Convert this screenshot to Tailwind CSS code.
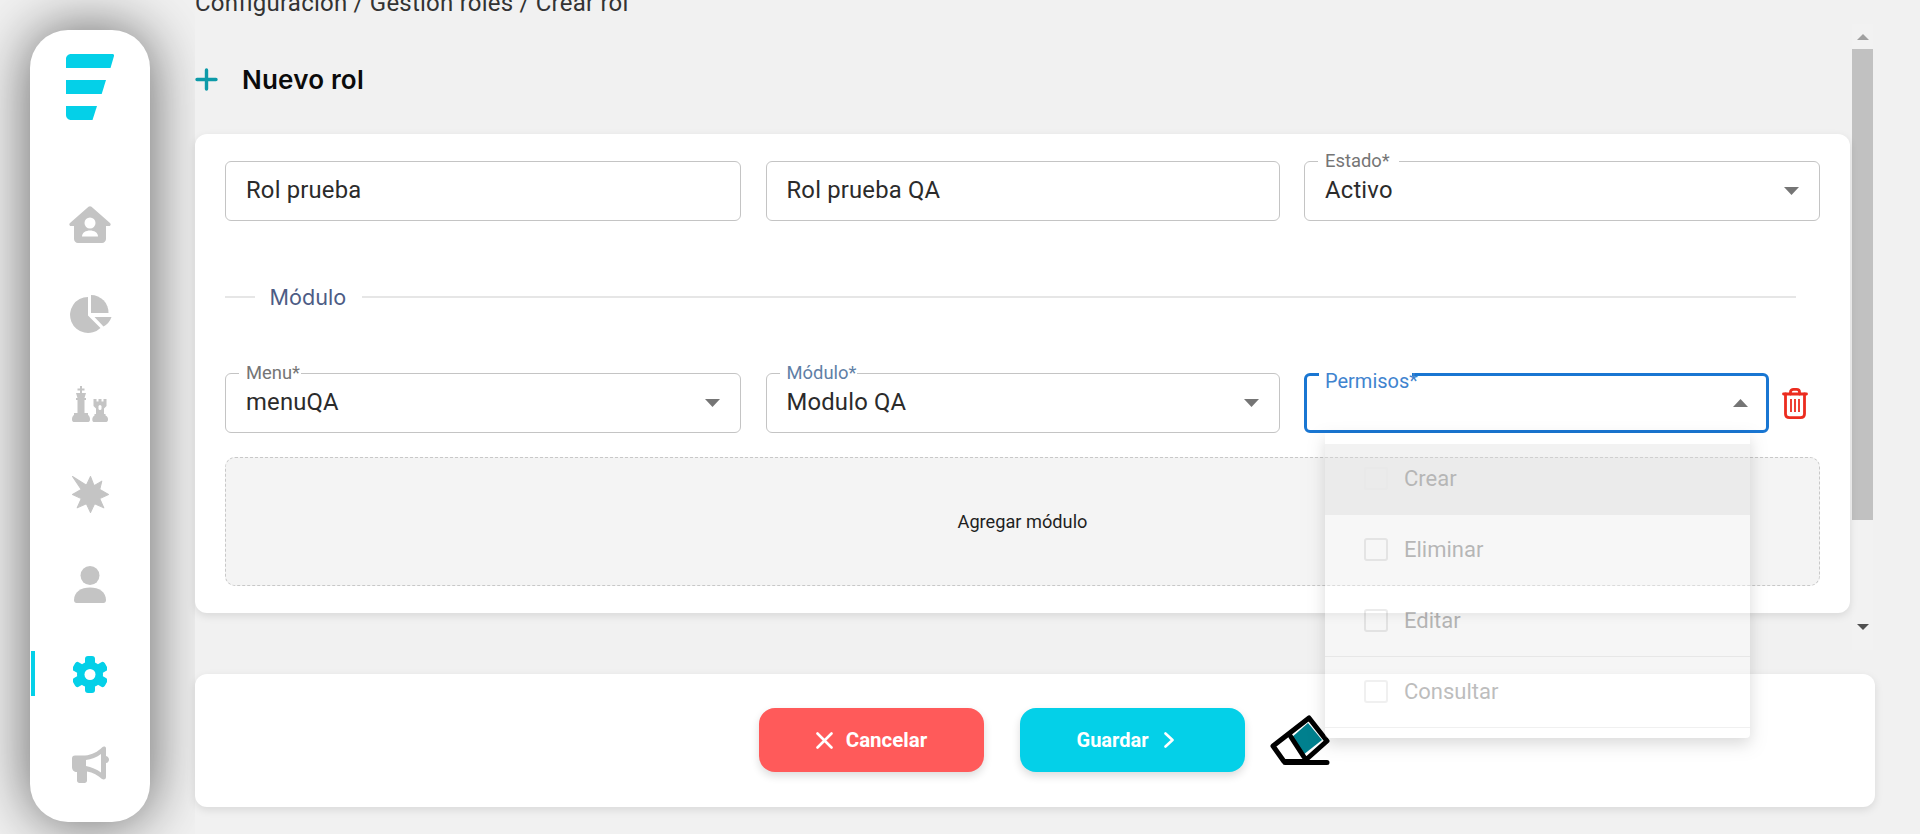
<!DOCTYPE html>
<html lang="es">
<head>
<meta charset="utf-8">
<title>Crear rol</title>
<script src="https://cdn.jsdelivr.net/npm/@tailwindcss/browser@4"></script>
</head>
<body class="bg-[#f1f1f1]">
<div class="w-[1920px] h-[834px] overflow-hidden flex bg-[#f1f1f1] font-['Roboto',sans-serif] text-[#2b2b2b]">

  <!-- Sidebar -->
  <aside class="relative shrink-0 ml-[30px] mt-[30px] w-[120px] h-[792px] bg-white rounded-[38px] shadow-[0_0_60px_rgba(0,0,0,0.6)] flex flex-col items-center">
    <svg class="mt-[24px] ml-[-1px]" width="48" height="66" viewBox="0 0 48 66" fill="#04d0e8">
      <path d="M5 0H46.500C47.600 0 48.300 1 48 2L44.500 14H0V5C0 2.200 2.200 0 5 0Z"/>
      <path d="M0 26H40L35.700 40H0Z"/>
      <path d="M0 52H31L26.500 66H5C2.200 66 0 63.800 0 61Z"/>
    </svg>
    <div class="mt-[59px] flex flex-col w-full">
      <div class="h-[90px] flex items-center justify-center">
        <svg width="42" height="37" viewBox="0 0 42 37" fill="#c4c4c4">
          <path d="M19.500 .8C20.400 0 21.600 0 22.500 .8L41 17C42.300 18.200 41.600 20 40 20H37V33C37 35.200 35.200 37 33 37H9C6.800 37 5 35.200 5 33V20H2C.4 20-.3 18.200 1 17Z"/>
          <circle cx="21" cy="17" r="5.500" fill="#fff"/>
          <path d="M13 30.500C13 26.500 17 24.500 21 24.500S29 26.500 29 30.500Z" fill="#fff"/>
        </svg>
      </div>
      <div class="h-[90px] flex items-center justify-center">
        <svg class="ml-[2px]" width="42" height="40" viewBox="0 0 42 40" fill="#c4c4c4">
          <path d="M18 3A18 18 0 1 0 30.500 34L18 21.500Z"/>
          <path d="M21 1A17.500 17.500 0 0 1 38.500 19H21Z"/>
          <path d="M24.500 23H41.500A17 17 0 0 1 33.500 32.500Z"/>
        </svg>
      </div>
      <div class="h-[90px] flex items-center justify-center">
        <svg width="36" height="37" viewBox="0 0 36 37" fill="#c4c4c4">
          <path d="M8 0H10V2.500H12.500V4.500H10V7H14L12.500 12H14V14H12.500V27H16V29C17.500 30 18 31.500 18 33.500C18 35.500 17 36 15.500 36H2.500C1 36 0 35.500 0 33.500C0 31.500 .5 30 2 29V27H5.500V14H4V12H5.500L4 7H8V4.500H5.500V2.500H8Z"/>
          <path d="M21.500 13H24.500V15.500H26.500V13H29.500V15.500H31.500V13H34.500V20L32 22.500V28H33.500V29.500C35.500 30.500 36 31.500 36 33.500C36 35.500 35 36 33.500 36H22.500C21 36 20.300 35.500 20.300 33.500C20.300 31.500 21 30.500 22.500 29.500V28H24V22.500L21.500 20Z"/>
          <rect x="26.500" y="19" width="3" height="5" rx="1.500" fill="#fff"/>
        </svg>
      </div>
      <div class="h-[90px] flex items-center justify-center">
        <svg width="37" height="37" viewBox="0 0 36 36" fill="#c4c4c4" stroke="#c4c4c4" stroke-width="1" stroke-linejoin="round">
          <path d="M18 .5L21.500 9.500L29 5L27 13L35.500 18L27 22L31 31L22 27L18 35.500L14 27L5 31L9 22L.5 18L9 13L.5 .5L14 9Z"/>
        </svg>
      </div>
      <div class="h-[90px] flex items-center justify-center">
        <svg width="32" height="37" viewBox="0 0 32 37" fill="#c4c4c4">
          <circle cx="16" cy="9.500" r="9.500"/>
          <path d="M0 34C0 26 7 21.500 16 21.500S32 26 32 34C32 36 31 37 29.500 37H2.500C1 37 0 36 0 34Z"/>
        </svg>
      </div>
      <div class="h-[90px] flex items-center justify-center">
        <svg width="34" height="37" viewBox="-17 -18.500 34 37" fill="#04d0e8">
          <circle r="13"/>
          <rect x="-5" y="-18.500" width="10" height="9" rx="3"/>
          <rect x="-5" y="-18.500" width="10" height="9" rx="3" transform="rotate(60)"/>
          <rect x="-5" y="-18.500" width="10" height="9" rx="3" transform="rotate(120)"/>
          <rect x="-5" y="-18.500" width="10" height="9" rx="3" transform="rotate(180)"/>
          <rect x="-5" y="-18.500" width="10" height="9" rx="3" transform="rotate(240)"/>
          <rect x="-5" y="-18.500" width="10" height="9" rx="3" transform="rotate(300)"/>
          <circle r="5.500" fill="#fff"/>
        </svg>
      </div>
      <div class="h-[90px] flex items-center justify-center">
        <svg width="37" height="37" viewBox="0 0 37 37" fill="#c4c4c4">
          <path d="M3 9.500H13C20 9 26 5.500 30 1.500C31.500 0 34 .3 34 2.500V10C36 10.500 37 12 37 13.500S36 17 34 17V31C34 33.500 31.500 34 30 33C26 29.500 21 26.500 15 25.500V34.500C15 36 14 37 12.500 37H7.500C6 37 5 36 5 34.500V26C2 26 0 24 0 21V12.500C0 10.500 1 9.500 3 9.500Z"/>
          <path d="M14 14C19 13.500 25 11 29 8V26.500C25 23.500 19 21 14 20Z" fill="#fff"/>
        </svg>
      </div>
    </div>
    <span class="absolute left-[1px] top-[621px] w-[4px] h-[45px] bg-[#04d0e8]"></span>
  </aside>

  <!-- Main -->
  <main class="relative z-10 ml-[45px] w-[1725px] h-[834px] bg-[#f1f1f1] flex flex-col">
    <div class="h-[650px] flex shrink-0">
      <div class="w-[1655px] shrink-0">
        <p class="mt-[-9px] h-[24px] leading-[24px] text-[24px] tracking-[0.22px] text-[#333] whitespace-nowrap">Configuración / Gestión roles / Crear rol</p>
        <div class="mt-[34px] h-[60px] flex items-center gap-[24px]">
          <svg width="23" height="23" viewBox="0 0 23 23" stroke="#0d9aa8" stroke-width="3.400" stroke-linecap="round">
            <path d="M11.500 2V21M2 11.500H21"/>
          </svg>
          <h1 class="mt-[1px] font-['Inter',sans-serif] font-semibold text-[26px] tracking-[0.2px] text-[#0b0b0b]">Nuevo rol</h1>
        </div>

        <section class="mt-[25px] h-[479px] bg-white rounded-[12px] shadow-[0_3px_8px_rgba(0,0,0,0.1)] px-[30px] pt-[27px] relative">
          <div class="grid grid-cols-[516px_514px_516px] gap-x-[24.500px]">
            <div class="h-[60px] border border-[#c4c4c4] rounded-[6px] flex items-center pl-[20px] text-[23.800px] tracking-[0.2px]">Rol prueba</div>
            <div class="h-[60px] border border-[#c4c4c4] rounded-[6px] flex items-center pl-[20px] text-[23.800px] tracking-[0.2px]">Rol prueba QA</div>
            <div class="relative h-[60px] border border-[#c4c4c4] rounded-[6px] flex items-center justify-between pl-[20px] pr-[20px] text-[23.800px] tracking-[0.2px]">
              <span class="absolute left-[13px] top-[-14px] pl-[7px] pr-[9px] bg-white text-[18.400px] leading-[26px] text-[#757575] tracking-normal">Estado*</span>
              <span>Activo</span>
              <svg width="15" height="8" viewBox="0 0 15 8" fill="#757575"><path d="M0 0H15L7.500 8Z"/></svg>
            </div>
          </div>

          <div class="mt-[66px] h-[20px] flex items-center">
            <span class="w-[30px] h-[2px] bg-[#e6e6e6]"></span>
            <span class="pl-[14.500px] pr-[16px] font-['Inter',sans-serif] text-[21.600px] text-[#4d5c85]">Módulo</span>
            <span class="flex-1 h-[2px] bg-[#e6e6e6] mr-[24px]"></span>
          </div>

          <div class="mt-[66px] grid grid-cols-[516px_514px_516px] gap-x-[24.500px]">
            <div class="relative h-[60px] border border-[#c4c4c4] rounded-[6px] flex items-center justify-between pl-[20px] pr-[20px] text-[23.800px] tracking-[0.2px]">
              <span class="absolute left-[13px] top-[-14px] pl-[7px] pr-[1px] bg-white text-[18.400px] leading-[26px] text-[#757575] tracking-normal">Menu*</span>
              <span>menuQA</span>
              <svg width="15" height="8" viewBox="0 0 15 8" fill="#757575"><path d="M0 0H15L7.500 8Z"/></svg>
            </div>
            <div class="relative h-[60px] border border-[#c4c4c4] rounded-[6px] flex items-center justify-between pl-[20px] pr-[20px] text-[23.800px] tracking-[0.2px]">
              <span class="absolute left-[13px] top-[-14px] pl-[7px] pr-[1px] bg-white text-[18.400px] leading-[26px] text-[#5f7fa6] tracking-normal">Módulo*</span>
              <span>Modulo QA</span>
              <svg width="15" height="8" viewBox="0 0 15 8" fill="#757575"><path d="M0 0H15L7.500 8Z"/></svg>
            </div>
            <div class="flex items-center">
              <div class="relative w-[465px] h-[60px] border-[3px] border-[#1976d2] rounded-[6px] flex items-center justify-end pr-[18px]">
                <span class="absolute left-[12px] top-[-3px] w-[93px] h-[3px] bg-white"></span>
                <span class="absolute left-[18px] top-[-8px] text-[20px] leading-[26px] text-[#3f84cf]">Permisos*</span>
                <svg width="15" height="8" viewBox="0 0 15 8" fill="#757575"><path d="M0 8H15L7.500 0Z"/></svg>
              </div>
              <svg class="ml-[13px]" width="26" height="31" viewBox="0 0 26 31" fill="none" stroke="#ec2c1f" stroke-width="2.800" stroke-linejoin="round" stroke-linecap="round">
                <path d="M1.500 6H24.500"/>
                <path d="M8.500 6V4C8.500 2.300 9.800 1.400 11.500 1.400H14.500C16.200 1.400 17.500 2.300 17.500 4V6"/>
                <path d="M3.500 6V26C3.500 28.300 5.200 29.600 7.500 29.600H18.500C20.800 29.600 22.500 28.300 22.500 26V6"/>
                <path d="M9 11V24M13 11V24M17 11V24" stroke-width="1.800" stroke-linecap="butt"/>
              </svg>
            </div>
          </div>

          <div class="mt-[24px] h-[129px] rounded-[10px] border border-dashed border-[#c8c8c8] bg-[#f4f4f4] flex items-center justify-center text-[18.200px] text-[#1f1f1f]">Agregar módulo</div>
        </section>
      </div>

      <!-- Scrollbar -->
      <div class="ml-[2px] mt-[24px] w-[21px] flex flex-col items-center bg-[#f2f2f2]">
        <div class="h-[25px] flex items-center justify-center">
          <svg width="12" height="6" viewBox="0 0 12 6" fill="#a0a0a0"><path d="M0 6H12L6 0Z"/></svg>
        </div>
        <div class="w-full h-[471px] bg-[#c1c1c1]"></div>
        <div class="flex-1"></div>
        <div class="h-[26px] flex items-start justify-center">
          <svg width="12" height="6" viewBox="0 0 12 6" fill="#505050"><path d="M0 0H12L6 6Z"/></svg>
        </div>
      </div>
    </div>

    <!-- Actions -->
    <footer class="mt-[24px] w-[1680px] h-[133px] bg-white rounded-[12px] shadow-[0_3px_8px_rgba(0,0,0,0.1)] flex items-center pl-[564px] pb-[1px]">
      <button class="w-[225px] h-[64px] rounded-[16px] bg-[#ff5a5a] text-white font-bold text-[20.500px] flex items-center justify-center gap-[13px] shadow-[0_4px_8px_rgba(0,0,0,0.14)]">
        <svg width="17" height="17" viewBox="0 0 17 17" stroke="#fff" stroke-width="2.600" stroke-linecap="round"><path d="M1.500 1.500L15.500 15.500M15.500 1.500L1.500 15.500"/></svg>
        Cancelar
      </button>
      <button class="ml-[36px] w-[225px] h-[64px] pr-[14px] rounded-[16px] bg-[#04d0e8] text-white font-bold text-[20px] flex items-center justify-center gap-[16px] shadow-[0_4px_8px_rgba(0,0,0,0.14)]">
        Guardar
        <svg width="10" height="16" viewBox="0 0 10 16" fill="none" stroke="#fff" stroke-width="2.600" stroke-linecap="round" stroke-linejoin="round"><path d="M1.500 1.500L8.500 8L1.500 14.500"/></svg>
      </button>
      <svg class="ml-[20px]" width="70" height="60" viewBox="0 0 70 60" fill="none">
        <path d="M44 9L62 31L39 51H19L8 36Z" fill="#fff"/>
        <path d="M43 13L57 30L38 45L26 28Z" fill="#00808e"/>
        <path d="M44 8L62 31L39 51.500H19L8 36ZM26 27L39 47M20 52.500H62" stroke="#000" stroke-width="5" stroke-linejoin="round" stroke-linecap="round"/>
      </svg>
    </footer>

    <!-- Open dropdown, fading in -->
    <div class="absolute left-[1130px] top-[433px] w-[425px] h-[305px] pt-[11px] bg-white opacity-[0.36] rounded-b-[4px] shadow-[0_6px_16px_rgba(0,0,0,0.4)] text-[22px] text-[#4a4a4a]">
      <div class="h-[71px] pb-[2px] bg-[#dcdcdc] flex items-center pl-[39px] gap-[16px]"><span class="w-[24px] h-[23px] rounded-[3px] border-2 border-[#d6d6d6]"></span>Crear</div>
      <div class="h-[71px] pb-[2px] flex items-center pl-[39px] gap-[16px]"><span class="w-[24px] h-[23px] rounded-[3px] border-2 border-[#c8c8c8]"></span>Eliminar</div>
      <div class="h-[71px] pb-[2px] flex items-center pl-[39px] gap-[16px] border-b border-[#d6d6d6]"><span class="w-[24px] h-[23px] rounded-[3px] border-2 border-[#c8c8c8]"></span>Editar</div>
      <div class="h-[71px] pb-[2px] flex items-center pl-[39px] gap-[16px] border-b border-[#d6d6d6]"><span class="w-[24px] h-[23px] rounded-[3px] border-2 border-[#d6d6d6]"></span>Consultar</div>
    </div>
  </main>
</div>
</body>
</html>
